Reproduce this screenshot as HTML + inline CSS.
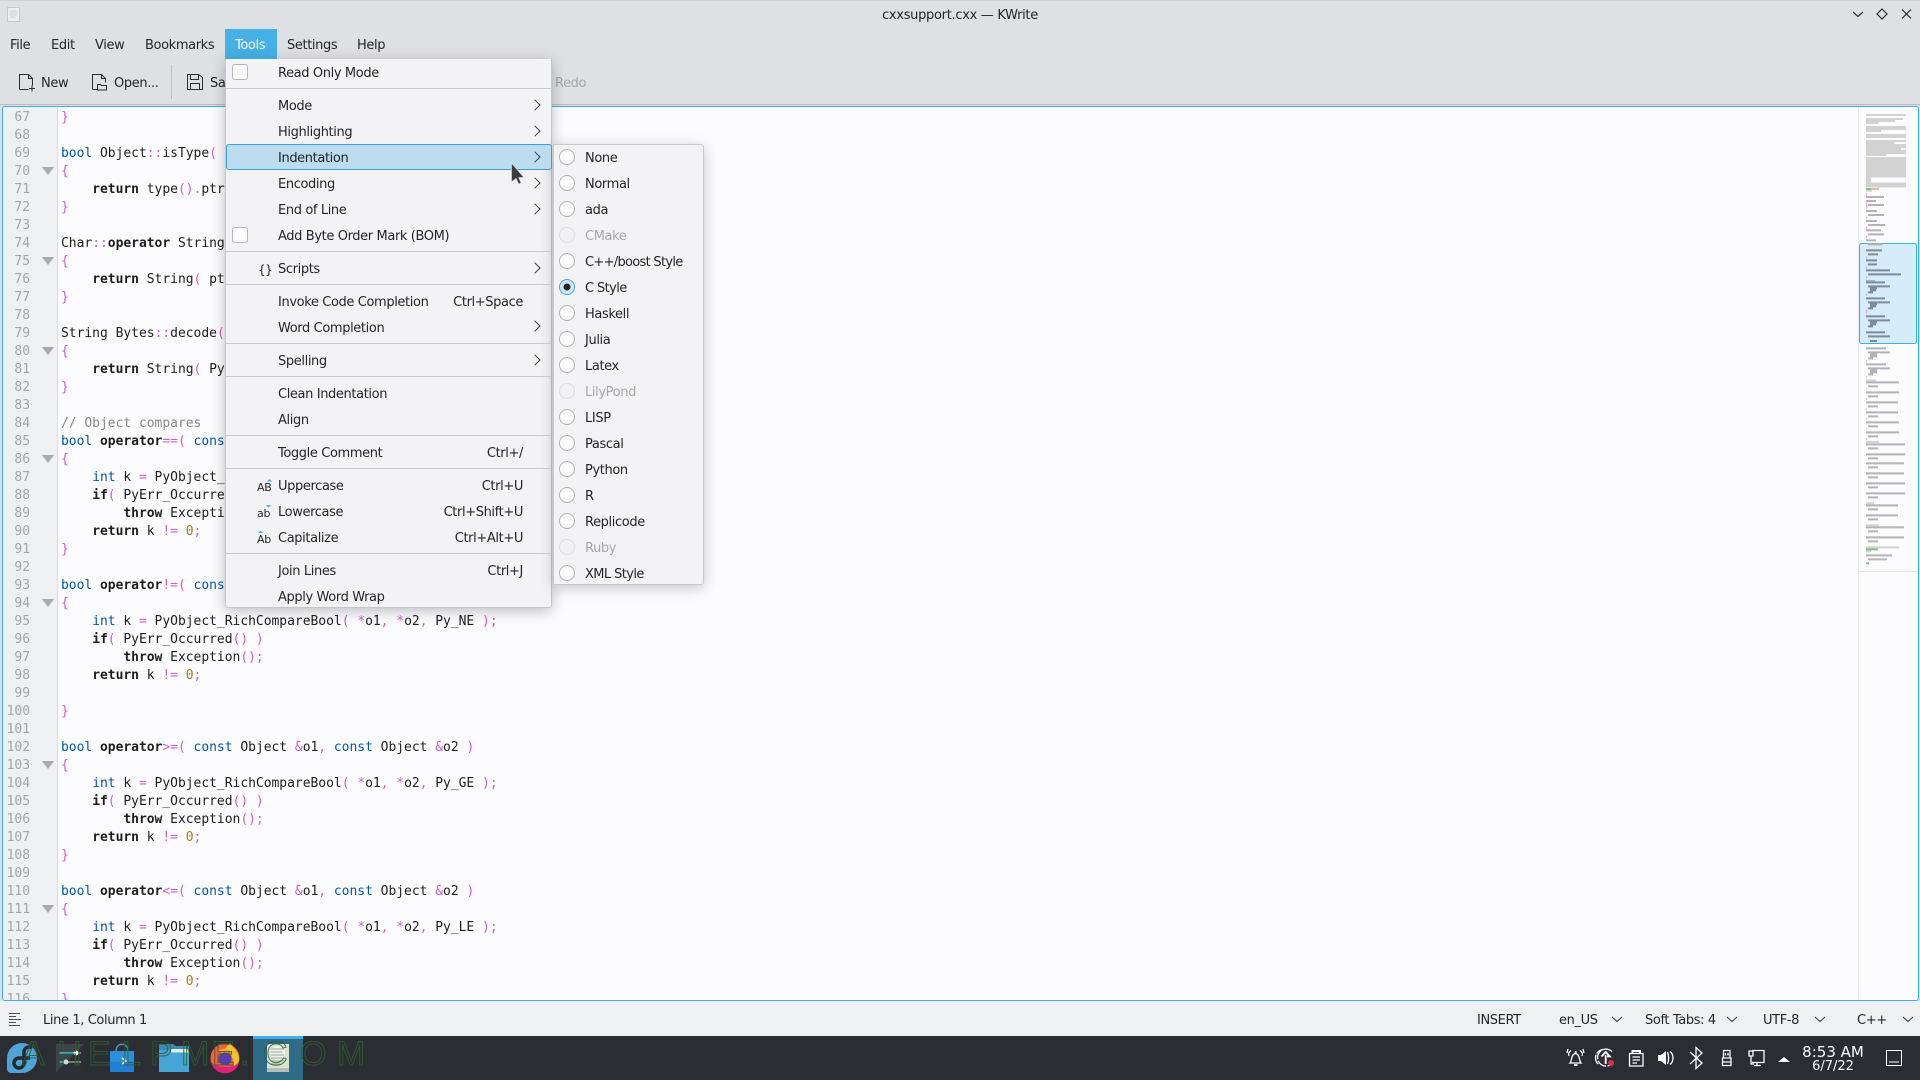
<!DOCTYPE html>
<html><head><meta charset="utf-8"><title>cxxsupport.cxx — KWrite</title>
<style>
html,body{margin:0;padding:0;width:1920px;height:1080px;overflow:hidden;background:#dee0e3}
body{position:relative;font-family:"DejaVu Sans","Liberation Sans",sans-serif;font-size:13px;letter-spacing:-.38px;color:#232629}
.a{position:absolute}
.t{position:absolute;line-height:18px;white-space:nowrap;margin-top:2px}
.r{position:absolute;line-height:18px;white-space:nowrap;text-align:right;right:1397px;margin-top:2px}
.d{color:#a6a8aa}
.sep{position:absolute;left:226px;width:325px;height:1px;background:#c6c8ca}
.arr{position:absolute;left:531px;width:7px;height:7px;border-top:1px solid #3b3e41;border-right:1px solid #3b3e41;transform:rotate(45deg)}
.cb{position:absolute;left:232px;width:14px;height:14px;border:1px solid #b4b6b8;border-radius:3px;background:#fcfcfc}
.mono{font-family:"DejaVu Sans Mono","Liberation Mono",monospace;font-size:13px;letter-spacing:-.03px;line-height:18px;white-space:pre;margin:0}
.k{color:#0057ae}.b{font-weight:bold;color:#1f1c1b}.p{color:#ca60ca}.n{color:#b08000}.m{color:#898887}
svg{position:absolute;left:0;top:0}
</style></head><body>

<!-- title bar -->
<div class="a" style="left:0;top:0;width:1920px;height:104px;background:#dee0e3"></div>
<div class="a" style="left:0;top:0;width:1920px;height:1px;background:#cfd1d3"></div>
<div class="t" style="left:0;width:1920px;text-align:center;top:5px;letter-spacing:-.3px">cxxsupport.cxx — KWrite</div>

<!-- menubar -->
<div class="a" style="left:225px;top:29px;width:52px;height:30px;background:#45b1e6"></div>
<div class="t" style="left:10px;top:35px">File</div>
<div class="t" style="left:51px;top:35px">Edit</div>
<div class="t" style="left:95px;top:35px">View</div>
<div class="t" style="left:145px;top:35px">Bookmarks</div>
<div class="t" style="left:235px;top:35px;color:#fcfcfc">Tools</div>
<div class="t" style="left:287px;top:35px">Settings</div>
<div class="t" style="left:357px;top:35px">Help</div>

<!-- toolbar -->
<div class="t" style="left:41px;top:73px">New</div>
<div class="t" style="left:114px;top:73px">Open...</div>
<div class="t" style="left:210px;top:73px">Save</div>
<div class="t" style="left:555px;top:73px;color:#a4a6a8">Redo</div>
<div class="a" style="left:171px;top:65px;width:1px;height:34px;background:#bcbec0"></div>
<div class="a" style="left:0;top:104px;width:1920px;height:1px;background:#b9bbbd"></div>

<!-- editor -->
<div class="a" style="left:2px;top:106px;width:1915px;height:893px;background:#fcfcff;border:1px solid #3daee9;border-radius:3px;overflow:hidden;box-sizing:content-box">
 <div class="a" style="left:0;top:0;width:54px;height:895px;background:#eff0f2;border-right:1px solid #dcdde0"></div>
 <div class="a" style="left:1855px;top:0;width:1px;height:895px;background:#e8e9ec"></div>
 <pre class="mono a" style="left:0;top:2px;width:27px;text-align:right;color:#a2a4a6">67
68
69
70
71
72
73
74
75
76
77
78
79
80
81
82
83
84
85
86
87
88
89
90
91
92
93
94
95
96
97
98
99
100
101
102
103
104
105
106
107
108
109
110
111
112
113
114
115
116</pre>
 <pre class="mono a" style="left:58px;top:2px;color:#1f1c1b"><span class="p">}</span>

<span class="k">bool</span> Object<span class="p">::</span>isType<span class="p">(</span> <span class="k">const</span> Type <span class="p">&amp;</span>t <span class="p">)</span> <span class="k">const</span>
<span class="p">{</span>
    <span class="b">return</span> type<span class="p">().</span>ptr<span class="p">()</span>
<span class="p">}</span>

Char<span class="p">::</span><span class="b">operator</span> String<span class="p">()</span> <span class="k">const</span>
<span class="p">{</span>
    <span class="b">return</span> String<span class="p">(</span> ptr<span class="p">()</span> <span class="p">);</span>
<span class="p">}</span>

String Bytes<span class="p">::</span>decode<span class="p">(</span> <span class="k">const</span> <span class="k">char</span> <span class="p">*</span>encoding <span class="p">)</span>
<span class="p">{</span>
    <span class="b">return</span> String<span class="p">(</span> PyUnicode_Decode<span class="p">()</span> <span class="p">);</span>
<span class="p">}</span>

<span class="m">// Object compares</span>
<span class="k">bool</span> <span class="b">operator</span><span class="p">==(</span> <span class="k">const</span> Object <span class="p">&amp;</span>o1<span class="p">,</span> <span class="k">const</span> Object <span class="p">&amp;</span>o2 <span class="p">)</span>
<span class="p">{</span>
    <span class="k">int</span> k <span class="p">=</span> PyObject_RichCompareBool<span class="p">(</span> <span class="p">*</span>o1<span class="p">,</span> <span class="p">*</span>o2<span class="p">,</span> Py_EQ <span class="p">);</span>
    <span class="b">if</span><span class="p">(</span> PyErr_Occurred<span class="p">()</span> <span class="p">)</span>
        <span class="b">throw</span> Exception<span class="p">();</span>
    <span class="b">return</span> k <span class="p">!=</span> <span class="n">0</span><span class="p">;</span>
<span class="p">}</span>

<span class="k">bool</span> <span class="b">operator</span><span class="p">!=(</span> <span class="k">const</span> Object <span class="p">&amp;</span>o1<span class="p">,</span> <span class="k">const</span> Object <span class="p">&amp;</span>o2 <span class="p">)</span>
<span class="p">{</span>
    <span class="k">int</span> k <span class="p">=</span> PyObject_RichCompareBool<span class="p">(</span> <span class="p">*</span>o1<span class="p">,</span> <span class="p">*</span>o2<span class="p">,</span> Py_NE <span class="p">);</span>
    <span class="b">if</span><span class="p">(</span> PyErr_Occurred<span class="p">()</span> <span class="p">)</span>
        <span class="b">throw</span> Exception<span class="p">();</span>
    <span class="b">return</span> k <span class="p">!=</span> <span class="n">0</span><span class="p">;</span>

<span class="p">}</span>

<span class="k">bool</span> <span class="b">operator</span><span class="p">&gt;=(</span> <span class="k">const</span> Object <span class="p">&amp;</span>o1<span class="p">,</span> <span class="k">const</span> Object <span class="p">&amp;</span>o2 <span class="p">)</span>
<span class="p">{</span>
    <span class="k">int</span> k <span class="p">=</span> PyObject_RichCompareBool<span class="p">(</span> <span class="p">*</span>o1<span class="p">,</span> <span class="p">*</span>o2<span class="p">,</span> Py_GE <span class="p">);</span>
    <span class="b">if</span><span class="p">(</span> PyErr_Occurred<span class="p">()</span> <span class="p">)</span>
        <span class="b">throw</span> Exception<span class="p">();</span>
    <span class="b">return</span> k <span class="p">!=</span> <span class="n">0</span><span class="p">;</span>
<span class="p">}</span>

<span class="k">bool</span> <span class="b">operator</span><span class="p">&lt;=(</span> <span class="k">const</span> Object <span class="p">&amp;</span>o1<span class="p">,</span> <span class="k">const</span> Object <span class="p">&amp;</span>o2 <span class="p">)</span>
<span class="p">{</span>
    <span class="k">int</span> k <span class="p">=</span> PyObject_RichCompareBool<span class="p">(</span> <span class="p">*</span>o1<span class="p">,</span> <span class="p">*</span>o2<span class="p">,</span> Py_LE <span class="p">);</span>
    <span class="b">if</span><span class="p">(</span> PyErr_Occurred<span class="p">()</span> <span class="p">)</span>
        <span class="b">throw</span> Exception<span class="p">();</span>
    <span class="b">return</span> k <span class="p">!=</span> <span class="n">0</span><span class="p">;</span>
<span class="p">}</span></pre>
</div>

<!-- page-level svg: top icons, fold triangles, minimap -->
<svg width="1920" height="1080" viewBox="0 0 1920 1080" fill="none">
 <!-- doc icon -->
 <rect x="7.5" y="7.5" width="12" height="14" fill="#eeeeec" stroke="#c5c7c9"/>
 <path d="M10 11h7M10 13h7M10 15h7M10 17h5" stroke="#cfd1d3"/>
 <!-- window controls -->
 <path d="M1853 12l5 4.500 5-4.500" stroke="#2b2e31" stroke-width="1.2"/>
 <path d="M1882 9l5 5-5 5-5-5z" stroke="#2b2e31" stroke-width="1.2"/>
 <path d="M1902 9.500l9 9M1911 9.500l-9 9" stroke="#2b2e31" stroke-width="1.2"/>
 <!-- toolbar icons -->
 <g stroke="#2b2e31" stroke-width="1">
  <path d="M19.500 89.500v-15h9l4 4v7M19.500 89.500h9M28.500 74.500v4h4M29 88.500h6M32 85.500v6"/>
  <path d="M92.500 89.500v-15h9l4 4v4M92.500 89.500h5M101.500 74.500v4h4M97.500 84.500h3l1 1h5v4.500h-9z"/>
  <path d="M187.500 74.500h11l4 3v12h-15zM190.500 74.500v5h8v-5M190.500 89.500v-6h9v6"/>
 </g>
 <!-- fold triangles -->
 <g fill="#a8aaac">
  <path d="M42 167h12l-6 8zM42 257h12l-6 8zM42 347h12l-6 8zM42 455h12l-6 8zM42 599h12l-6 8zM42 761h12l-6 8zM42 905h12l-6 8z"/>
 </g>
 <!-- minimap highlight -->
 <rect x="1859.500" y="243.500" width="57" height="100" rx="2" fill="#d6ecf8" stroke="#3daee9"/>
 <path d="M1858 571.500h59" stroke="#e6e7ea"/>
 <g transform="translate(1840,100) scale(.33333)">
  <g stroke="#d2d2d2" stroke-width="6">
   <path d="M78 45H198M78 57H189M78 63H165M78 69H114M78 81H198M78 87H198M78 93H123M78 105H198M78 111H198M78 123H198M78 129H162M78 135H198M78 141H198M78 147H183M78 153H198M78 159H198M78 165H138"/>
   <path d="M78 180H198M78 195H198M78 210H198M78 225H198M78 240H93M78 255H198" stroke-width="15"/>
   <path d="M78 173H198" stroke-width="3"/>
   <path d="M78 272H96"/>
   <path d="M78 543H105" stroke="#9fb9c6"/>
  </g>
  <path d="M78 267H93" stroke="#7fbf8e" stroke-width="6"/>
  <path d="M93 267H117" stroke="#efb59a" stroke-width="6"/>
  <g stroke="#b2b2b8" stroke-width="6">
   <path d="M78 291H132M78 303H108M84 315H132M78 333H111M84 345H132M78 363H111M84 375H135M78 391H123M84 403H132M78 421H108M84 433H129"/>
  </g>
  <g stroke="#7d8b99" stroke-width="6">
   <path d="M78 451H126M84 463H114M78 481H111M84 493H111M78 511H150M84 523H183M78 547H135M84 559H150M90 565H111M90 571H108M84 577H99M78 595H135M84 607H150M90 613H111M90 619H108M84 625H99M78 649H135M84 661H150M90 667H111M90 673H108M84 679H99M78 697H135M84 709H150"/>
  </g>
  <path d="M80 280V286M80 308V326M80 350V356M80 380V386M80 408V414M80 470V476M80 500V506M80 530V536M80 580V586M80 630V640" stroke="#d79ad7" stroke-width="3"/>
 </g>
 <g transform="translate(1840,340) scale(.33333)">
  <g stroke="#7d8b99" stroke-width="6"><path d="M90 3H111"/></g>
  <g stroke="#b2b2b8" stroke-width="6">
   <path d="M78 25H138M84 37H150M90 43H111M90 49H111M84 55H99M78 73H138M84 85H150M90 91H111M90 97H111M84 103H99M78 127H177M84 139H114M78 157H177M84 169H114M78 187H174M84 199H114M78 217H174M84 229H114M78 247H177M84 259H114M78 277H177M84 289H114M78 313H195M84 325H114M78 343H195M84 355H114M78 370H192M84 382H114M78 400H192M84 412H114M78 430H195M84 442H114M78 460H195M84 472H114M78 496H174M84 508H114M78 526H174M84 538H114M78 562H192M84 574H114M78 592H192M84 604H114M78 646H156M84 658H141"/>
  </g>
  <g stroke="#d2d2d2" stroke-width="6"><path d="M78 121H108M78 306H117M78 490H102M78 556H117M78 622H177M78 634H93"/></g>
  <path d="M78 628H114M78 670H87" stroke="#7fbf8e" stroke-width="6"/>
  <path d="M80 60V64M80 108V112M80 145V149M80 175V179M80 205V209M80 235V239M80 265V269M80 295V299M80 680H82M86 680H87" stroke="#d79ad7" stroke-width="3"/>
 </g>
</svg>

<!-- status bar -->
<div class="a" style="left:0;top:1001px;width:1920px;height:35px;background:#eff0f1"></div>
<div class="t" style="left:43px;top:1010px">Line 1, Column 1</div>
<div class="t" style="left:1477px;top:1010px">INSERT</div>
<div class="t" style="left:1559px;top:1010px">en_US</div>
<div class="t" style="left:1645px;top:1010px">Soft Tabs: 4</div>
<div class="t" style="left:1763px;top:1010px">UTF-8</div>
<div class="t" style="left:1857px;top:1010px">C++</div>

<!-- taskbar -->
<div class="a" style="left:0;top:1036px;width:1920px;height:44px;background:#2a2e32"></div>
<div class="a" style="left:253px;top:1036px;width:50px;height:44px;background:#2f6b87"></div>
<div class="a" style="left:253px;top:1036px;width:50px;height:3px;background:#3daee9"></div>
<div class="t" style="left:1783px;top:1043px;margin-top:0;width:100px;text-align:center;color:#fcfcfc;font-size:15px;letter-spacing:0">8:53 AM</div>
<div class="t" style="left:1783px;top:1058px;margin-top:0;width:100px;text-align:center;color:#fcfcfc;font-size:13px;letter-spacing:0">6/7/22</div>

<svg width="1920" height="1080" viewBox="0 0 1920 1080" fill="none">
 <!-- status icons -->
 <path d="M9 1013.500h11M9 1016.500h7M9 1019.500h12M9 1022.500h7M9 1025.500h11" stroke="#4d5154"/>
 <g stroke="#3b3e41" stroke-width="1.1">
  <path d="M1612 1017l5 4.500 5-4.500M1727 1017l5 4.500 5-4.500M1815 1017l5 4.500 5-4.500M1903 1017l5 4.500 5-4.500"/>
 </g>
 <!-- fedora -->
 <path d="M22 1043a15 15 0 0 1 0 30H11a4 4 0 0 1-4-4v-11a15 15 0 0 1 15-15z" fill="#4fa3d6"/>
 <path d="M24 1058h-5a5 5 0 1 0 5 5v-11a5 5 0 0 1 8-4M24 1058h6" stroke="#262a2e" stroke-width="3.500"/>
 <!-- settings -->
 <rect x="56" y="1044" width="28" height="28" fill="#404448"/>
 <path d="M56 1072l28-28v28z" fill="#2d3033"/>
 <path d="M59 1053h17" stroke="#3da6dc" stroke-width="2"/><path d="M76 1053h5" stroke="#77797b" stroke-width="2"/>
 <circle cx="76" cy="1053" r="2.500" fill="#fcfcfc"/>
 <path d="M59 1062h7" stroke="#3da6dc" stroke-width="2"/><path d="M66 1062h15" stroke="#77797b" stroke-width="2"/>
 <circle cx="66" cy="1062" r="2.500" fill="#c9e0d5"/>
 <!-- discover -->
 <rect x="110" y="1051" width="24" height="21" fill="#2b8fdb"/>
 <rect x="110" y="1062" width="24" height="10" fill="#1f7fd0"/>
 <path d="M116 1051c0-9 12-9 12 0" stroke="#4c8cb0" stroke-width="1.500"/>
 <path d="M122 1058l4 3-4 3" stroke="#e6f4fb" stroke-width="1.500"/>
 <!-- folder -->
 <path d="M159 1044h14l3 2h13v26h-30z" fill="#3a8bb8"/>
 <rect x="159" y="1050" width="30" height="22" fill="#45a6d6"/>
 <rect x="171" y="1049" width="18" height="3.500" fill="#e4ecdf"/>
 <!-- firefox -->
 <circle cx="225" cy="1058" r="14.500" fill="#f6603a"/>
 <path d="M211 1062a14.500 14.500 0 0 0 28 1c-6 5-20 6-28-1z" fill="#e3217c"/>
 <path d="M230 1043c2 4 9 8 9 16 0 3-2 5-5 7-1-8-3-16-9-17z" fill="#e8c828"/>
 <path d="M218 1051c3-3 9-3 11 0l-3 3z" fill="#f7a72e"/>
 <circle cx="225" cy="1059" r="6.500" fill="#5a3db5"/>
 <!-- kwrite -->
 <rect x="267" y="1044" width="22" height="26" fill="#d9e4d3"/>
 <rect x="267" y="1068" width="22" height="4" fill="#b8bcba"/>
 <circle cx="278" cy="1053" r="7" fill="#eef1ec"/>
 <path d="M271 1049h13M271 1052h11M271 1055h13M271 1058h11M271 1061h13M271 1064h9" stroke="#9aa79a"/>
 <!-- watermark -->
 <text y="1065" x="22 57 88 122 150 181 212 240 263 300 337" font-family="Liberation Sans,sans-serif" font-size="34" fill="none" stroke="#2f5d33" stroke-width="1" opacity=".85" style="letter-spacing:0">AHELPME.COM</text>
 <!-- tray -->
 <g stroke="#fcfcfc" stroke-width="1.300">
  <path d="M1570 1063c2-2 1-9 5.500-9.500 4.500 .5 3.500 7.500 5.500 9.500z"/><path d="M1575.700 1053v-2M1574 1065h3.500" stroke-width="1.800"/>
  <path d="M1569 1056c-1-2 0-4 2-5.500M1582 1056c1-2 0-4-2-5.500M1567 1053l1-4M1584 1053l-1-4"/>
  <path d="M1612 1051.500a8.500 8.500 0 1 0 1 11M1598 1064a8.500 8.500 0 0 1 7-14.500" stroke-dasharray="10 1.500"/>
  <path d="M1605.700 1064v-9M1601.500 1056.500l4.200-4.500 4.200 4.500h-2.800" stroke-width="1.800"/>
  <path d="M1629.500 1053.500h13.500v12.500h-13.500zM1632.500 1057h7.500M1632.500 1060h7.500M1632.500 1063h4.500"/>
  <path d="M1632.500 1053v-2h7.500v2" stroke-width="2"/>
  <path d="M1670 1051.500c4 3 4 10 0 13M1667.500 1052c1.500 4 1.500 8 0 12"/>
  <path d="M1690 1052l12 11-6 5.500v-21l6 5.500-12 11"/>
  <path d="M1722.500 1058h8.500v7.500h-8.500zM1723.500 1058v-7.500h6.500v7.500M1723 1062h8M1725.500 1053v2.500M1728 1053v2.500"/>
  <path d="M1752 1050.500h12v12h-12M1749 1051h4v5h-4zM1751 1056v8h3M1757 1063v2.500M1754 1065.500h7"/>
 </g>
 <path d="M1658 1055v6h3l5 4v-14l-5 4z" fill="#fcfcfc"/>
 <circle cx="1611" cy="1063" r="3" fill="#d8314f"/>
 <path d="M1778 1062l6-5 6 5z" fill="#fcfcfc"/>
 <rect x="1886.500" y="1050.500" width="15" height="15" stroke="#fcfcfc"/>
 <path d="M1889 1062h10" stroke="#fcfcfc"/>
</svg>

<!-- tools menu -->
<div class="a" style="left:225px;top:59px;width:327px;height:549px;background:#f3f3f5;border:1px solid #c4c6c8;border-top:none;border-radius:0 0 3px 3px;box-sizing:border-box;box-shadow:0 3px 14px rgba(0,0,0,.25)"></div>
<div class="a" style="left:553px;top:144px;width:151px;height:441px;background:#f3f3f5;border:1px solid #c8cacc;border-radius:0 3px 3px 0;box-sizing:border-box;box-shadow:0 3px 14px rgba(0,0,0,.22)"></div>
<div class="a" style="left:226px;top:144px;width:326px;height:26px;background:#bbddef;border:1px solid #3f9fd0;border-radius:3px;box-sizing:border-box"></div>

<div class="cb" style="top:64px"></div>
<div class="cb" style="top:227px"></div>

<div class="sep" style="top:88px"></div>
<div class="sep" style="top:251px"></div>
<div class="sep" style="top:284px"></div>
<div class="sep" style="top:343px"></div>
<div class="sep" style="top:376px"></div>
<div class="sep" style="top:435px"></div>
<div class="sep" style="top:468px"></div>
<div class="sep" style="top:553px"></div>

<div class="t" style="left:278px;top:63px">Read Only Mode</div>
<div class="t" style="left:278px;top:96px">Mode</div>
<div class="t" style="left:278px;top:122px">Highlighting</div>
<div class="t" style="left:278px;top:148px">Indentation</div>
<div class="t" style="left:278px;top:174px">Encoding</div>
<div class="t" style="left:278px;top:200px">End of Line</div>
<div class="t" style="left:278px;top:226px">Add Byte Order Mark (BOM)</div>
<div class="t" style="left:258px;top:259px;font-size:12px;letter-spacing:-.5px">{}</div>
<div class="t" style="left:278px;top:259px">Scripts</div>
<div class="t" style="left:278px;top:292px">Invoke Code Completion</div>
<div class="r" style="top:292px">Ctrl+Space</div>
<div class="t" style="left:278px;top:318px">Word Completion</div>
<div class="t" style="left:278px;top:351px">Spelling</div>
<div class="t" style="left:278px;top:384px">Clean Indentation</div>
<div class="t" style="left:278px;top:410px">Align</div>
<div class="t" style="left:278px;top:443px">Toggle Comment</div>
<div class="r" style="top:443px">Ctrl+/</div>
<div class="t" style="left:257px;top:477px;font-size:11px;letter-spacing:-.3px">AB</div>
<div class="t" style="left:278px;top:476px">Uppercase</div>
<div class="r" style="top:476px">Ctrl+U</div>
<div class="t" style="left:257px;top:503px;font-size:11px;letter-spacing:-.3px">ab</div>
<div class="t" style="left:278px;top:502px">Lowercase</div>
<div class="r" style="top:502px">Ctrl+Shift+U</div>
<div class="t" style="left:257px;top:529px;font-size:11px;letter-spacing:-.3px">Ab</div>
<div class="t" style="left:278px;top:528px">Capitalize</div>
<div class="r" style="top:528px">Ctrl+Alt+U</div>
<div class="t" style="left:278px;top:561px">Join Lines</div>
<div class="r" style="top:561px">Ctrl+J</div>
<div class="t" style="left:278px;top:587px">Apply Word Wrap</div>

<div class="arr" style="top:101px"></div>
<div class="arr" style="top:127px"></div>
<div class="arr" style="top:153px"></div>
<div class="arr" style="top:179px"></div>
<div class="arr" style="top:205px"></div>
<div class="arr" style="top:264px"></div>
<div class="arr" style="top:322px"></div>
<div class="arr" style="top:356px"></div>

<!-- submenu -->
<div class="t" style="left:585px;top:148px">None</div>
<div class="t" style="left:585px;top:174px">Normal</div>
<div class="t" style="left:585px;top:200px">ada</div>
<div class="t d" style="left:585px;top:226px">CMake</div>
<div class="t" style="left:585px;top:252px;letter-spacing:-.7px">C++/boost Style</div>
<div class="t" style="left:585px;top:278px;letter-spacing:-.6px">C Style</div>
<div class="t" style="left:585px;top:304px">Haskell</div>
<div class="t" style="left:585px;top:330px">Julia</div>
<div class="t" style="left:585px;top:356px">Latex</div>
<div class="t d" style="left:585px;top:382px">LilyPond</div>
<div class="t" style="left:585px;top:408px">LISP</div>
<div class="t" style="left:585px;top:434px">Pascal</div>
<div class="t" style="left:585px;top:460px">Python</div>
<div class="t" style="left:585px;top:486px">R</div>
<div class="t" style="left:585px;top:512px">Replicode</div>
<div class="t d" style="left:585px;top:538px">Ruby</div>
<div class="t" style="left:585px;top:564px;letter-spacing:-.6px">XML Style</div>

<svg width="1920" height="1080" viewBox="0 0 1920 1080" fill="none">
 <g fill="#fcfcfc" stroke="#b0b2b4">
  <circle cx="567" cy="157" r="7.500"/><circle cx="567" cy="183" r="7.500"/><circle cx="567" cy="209" r="7.500"/>
  <circle cx="567" cy="261" r="7.500"/><circle cx="567" cy="313" r="7.500"/><circle cx="567" cy="339" r="7.500"/>
  <circle cx="567" cy="365" r="7.500"/><circle cx="567" cy="417" r="7.500"/><circle cx="567" cy="443" r="7.500"/>
  <circle cx="567" cy="469" r="7.500"/><circle cx="567" cy="495" r="7.500"/><circle cx="567" cy="521" r="7.500"/>
  <circle cx="567" cy="573" r="7.500"/>
 </g>
 <g fill="#f2f2f4" stroke="#dcdde0">
  <circle cx="567" cy="235" r="7.500"/><circle cx="567" cy="391" r="7.500"/><circle cx="567" cy="547" r="7.500"/>
 </g>
 <circle cx="567" cy="287" r="7.500" fill="#cfe8f6" stroke="#3daee9"/>
 <circle cx="567" cy="287" r="3.500" fill="#232629"/>
 <!-- case icon triangles -->
 <path d="M267 481.500l2.500-2.500 2.500 2.500z" fill="#3daee9"/>
 <path d="M266 505l5 0-2.500 2.500z" fill="#3daee9"/>
 <path d="M258 533l2.500-2.500 2.500 2.500z" fill="#3daee9"/>
 <!-- cursor -->
 <path d="M511.500 163v19l4.500-3.500 2.800 5.500 2.400-1-2.500-5.500h5.300z" fill="#3a3e42" stroke="#e8e8e8" stroke-width=".6"/>
</svg>
</body></html>
